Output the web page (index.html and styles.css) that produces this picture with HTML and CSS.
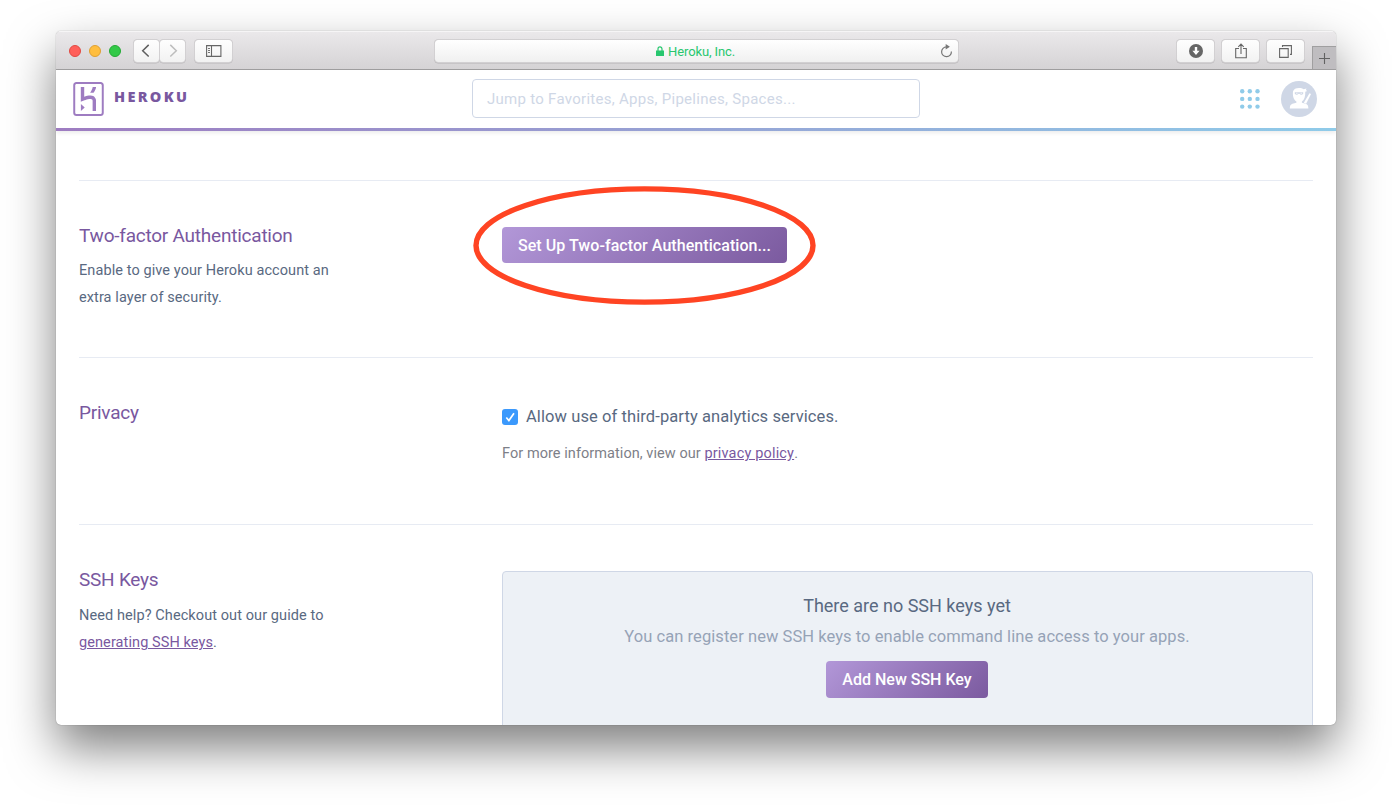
FILE: index.html
```
<!DOCTYPE html>
<html lang="en">
<head>
<meta charset="utf-8">
<title>Heroku, Inc.</title>
<link rel="stylesheet" href="styles.css">
</head>
<body>
<div class="window">
  <div class="toolbar">
    <div class="lights"><span class="light red"></span><span class="light yellow"></span><span class="light green"></span></div>
    <div class="nav">
      <button class="tool back"><svg width="26" height="22" viewBox="0 0 26 22"><path d="M14.700 4.900 8.700 10.700l6 5.800" fill="none" stroke="#5f5f5f" stroke-width="1.500"/></svg></button>
      <button class="tool forward"><svg width="26" height="22" viewBox="0 0 26 22"><path d="m10.300 4.900 6 5.800-6 5.800" fill="none" stroke="#bdbdbd" stroke-width="1.500"/></svg></button>
    </div>
    <button class="tool side"><svg width="16" height="12" viewBox="0 0 16 12" fill="none" stroke="#666"><path d="M.6.6h14.300v10.800H.6zM5.500.5v11" stroke-width="1.100"/><path d="M2 3.500h2M2 5.500h2M2 7.500h2" stroke-width=".9"/></svg></button>
    <div class="address">
      <span class="site"><svg width="8" height="10" viewBox="0 0 8 10"><path d="M2 5V3a2 2.200 0 0 1 4 0v2" fill="none" stroke="#28c76f" stroke-width="1.200"/><path d="M0 4.400h8V10H0z" fill="#28c76f"/></svg><span class="site-name">Heroku, Inc.</span></span>
      <svg width="13" height="14" viewBox="0 0 13 14"><path d="M6.500 2.900a4.900 4.900 0 1 0 4.900 4.600" fill="none" stroke="#777" stroke-width="1.200"/><path d="M5.700 0v5.400L9.900 2.800z" fill="#777"/></svg>
    </div>
    <div class="actions">
      <button class="tool wide"><svg width="14" height="14" viewBox="0 0 14 14"><circle cx="7" cy="7" r="7" fill="#666"/><path d="M5.800 3h2.400v3.800h2.400L7 10.900 3.400 6.800h2.400z" fill="#fff"/></svg></button>
      <button class="tool wide"><svg width="12" height="16" viewBox="0 0 12 16" fill="none" stroke="#666" stroke-width="1.100"><path d="M4 5.500H.7v9.300h10.600V5.500H8M6 11V1.200M3.300 3.800 6 1.100l2.700 2.700"/></svg></button>
      <button class="tool wide"><svg width="13" height="13" viewBox="0 0 13 13" fill="none" stroke="#666" stroke-width="1.100"><path d="M.6 3.600h8.600v8.800H.6zM3.500 2V.6h8.900v8.800H11"/></svg></button>
    </div>
    <button class="new-tab"><svg width="11" height="11" viewBox="0 0 11 11"><path d="M5.500 0v11M0 5.500h11" stroke="#626262" stroke-width="1.100"/></svg></button>
  </div>
  <header class="header">
    <div class="brand">
      <svg width="31" height="34" viewBox="1.23 0 21.54 24" fill="#9e7cc1"><path d="M20.61 0H3.39C2.189 0 1.23.96 1.23 2.16v19.681c0 1.198.959 2.159 2.16 2.159h17.22c1.2 0 2.159-.961 2.159-2.159V2.16C22.77.96 21.811 0 20.61 0zm.76 21.641c0 .539-.421.96-.96.96H3.59c-.54 0-.96-.421-.96-.96V2.36c0-.54.42-.961.96-.961h16.82c.539 0 .96.421.96.961v19.281zM6.63 20.399L9.33 18l-2.7-2.4v4.799zm9.72-9.719c-.479-.48-1.379-1.08-2.879-1.08-1.621 0-3.301.421-4.5.84V3.6h-2.4v10.38l1.68-.78s2.76-1.26 5.16-1.26c1.2 0 1.5.66 1.5 1.26v7.2h2.4v-7.2c.059-.179.059-1.501-.961-2.52zM13.17 7.5h2.4c1.08-1.26 1.62-2.521 1.8-3.9h-2.399c-.241 1.379-.841 2.64-1.801 3.9z"/></svg>
      <span class="brand-name">HEROKU</span>
    </div>
    <div class="search">Jump to Favorites, Apps, Pipelines, Spaces...</div>
    <div class="account">
      <svg width="20" height="20" viewBox="0 0 20 20" fill="#8fcbe9"><circle cx="2.200" cy="2.200" r="2.200"/><circle cx="9.800" cy="2.200" r="2.200"/><circle cx="17.500" cy="2.200" r="2.200"/><circle cx="2.200" cy="9.900" r="2.200"/><circle cx="9.800" cy="9.900" r="2.200"/><circle cx="17.500" cy="9.900" r="2.200"/><circle cx="2.200" cy="17.600" r="2.200"/><circle cx="9.800" cy="17.600" r="2.200"/><circle cx="17.500" cy="17.600" r="2.200"/></svg>
      <svg width="36" height="36" viewBox="0 0 36 36"><circle cx="18" cy="18" r="18" fill="#cfd7e6"/><g fill="#fff"><path d="M12 10.600C12.600 8 15 7 18 7c2 0 3.500.4 4.700 1.200l2.800-.8-.6 1.700 1.300 1-1.900.6c.1 4.600-.9 8.200-3.400 9.800v1.300l3.900 1c1.800.7 2.600 2 2.600 4.600H8.800c0-2.600.8-3.900 2.600-4.600l4-1v-1.300C12.600 18.900 11.500 15 12 10.600z"/><path d="m28.500 12.200 1.500.9-4.900 9.600-2.300-1z"/></g><path d="M13.800 11.200h8.400v1.500c-.8 1.200-2.800 1.300-3.700.1h-1c-.9 1.200-2.900 1.100-3.700-.1z" fill="#cfd7e6"/><path d="M15 12.300h1.600M19.500 12.300h1.600" stroke="#fff" stroke-width=".7"/></svg>
    </div>
  </header>
  <main class="content">
    <section class="row first">
      <div class="about"><h2>Two-factor Authentication</h2><p>Enable to give your Heroku account an<br>extra layer of security.</p></div>
      <div class="marked"><button class="btn setup">Set Up Two-factor Authentication...</button><svg class="ring" width="344" height="120" viewBox="0 0 344 120"><ellipse cx="172.500" cy="60.500" rx="168.500" ry="56.600" fill="none" stroke="#ff4423" stroke-width="5.400"/></svg></div>
    </section>
    <section class="row second">
      <div class="about"><h2>Privacy</h2></div>
      <div class="field">
        <div class="check"><span class="box"><svg width="16" height="16" viewBox="0 0 16 16"><path d="m4.300 8.500 2.600 3L12 4.300" fill="none" stroke="#fff" stroke-width="1.700"/></svg></span><span>Allow use of third-party analytics services.</span></div>
        <div class="note">For more information, view our <a>privacy policy</a>.</div>
      </div>
    </section>
    <section class="row third">
      <div class="about"><h2>SSH Keys</h2><p>Need help? Checkout out our guide to<br><a>generating SSH keys</a>.</p></div>
      <div class="panel"><h3>There are no SSH keys yet</h3><p>You can register new SSH keys to enable command line access to your apps.</p><button class="btn add">Add New SSH Key</button></div>
    </section>
  </main>
</div>
</body>
</html>
```
FILE: styles.css
```
* { box-sizing: border-box; }
body { margin: 0; height: 805px; padding: 31px 0 0 56px; overflow: hidden; background: #fff; font-family: Roboto, "Liberation Sans", sans-serif; color: #596981; }
button { font-family: inherit; border: 0; margin: 0; padding: 0; }
svg { display: block; flex: none; }
h2, h3, p { margin: 0; font-weight: 400; }

.window { width: 1280px; height: 694px; overflow: hidden; background: #fff; border-radius: 5px; display: flex; flex-direction: column;
  box-shadow: 0 0 1px rgba(0,0,0,.5), 0 23px 48px rgba(0,0,0,.5); }

.toolbar { height: 39px; flex: none; display: flex; align-items: flex-start; padding: 8px 0 0 13px; background: linear-gradient(#ebe9eb, #d5d3d5); border-bottom: 1px solid #a09fa0; box-shadow: inset 0 1px #f6f5f6; }
.lights { display: flex; gap: 8px; padding-top: 6px; width: 65px; }
.light { width: 12px; height: 12px; border-radius: 50%; border: 1px solid; }
.red { background: #ff5f5a; border-color: #e14942; }
.yellow { background: #ffbe3f; border-color: #dfa032; }
.green { background: #33c948; border-color: #24aa35; }
.nav { display: flex; gap: 1px; }
.tool { height: 22px; margin-top: 1px; display: flex; align-items: center; justify-content: center; background: linear-gradient(#fefefe, #f2f2f2); border-radius: 3.5px; box-shadow: 0 0 0 1px #d2d0d2, 0 .5px 0 1px #b9b7b9; }
.nav .tool { width: 25px; }
.side { width: 37px; margin-left: 10px; }
.address { width: 523px; height: 22px; margin: 1px 0 0 203px; background: linear-gradient(#fff, #f0f0f0); border-radius: 3.5px; box-shadow: 0 0 0 1px #d2d0d2, 0 .5px 0 1px #b5b3b5; display: flex; align-items: center; padding: 0 5px 0 221px; justify-content: space-between; }
.site { display: flex; align-items: center; gap: 4px; color: #28c76f; font-size: 13px; letter-spacing: -.1px; }
.actions { display: flex; gap: 8px; margin-left: 219px; }
.wide { width: 37px; }
.new-tab { width: 24px; height: 23px; margin: 7px 0 0 auto; background: #bfbdc0; border: 1px solid #a09fa0; border-width: 1px 0 0 1px; display: flex; align-items: center; justify-content: center; }

.header { height: 61px; flex: none; display: flex; align-items: flex-start; padding: 9px 19px 0 17px; border-bottom: 3px solid; border-image: linear-gradient(90deg, #9e7cc1, #8fcbe9) 1; box-shadow: 0 2px 4px rgba(0,0,0,.08); }
.brand { display: flex; gap: 10px; padding-top: 3px; width: 399px; }
.brand-name { font-family: "Open Sans", Roboto, sans-serif; font-size: 14.5px; font-weight: 800; letter-spacing: 2.3px; color: #79589f; line-height: 24px; padding-top: 3px; }
.search { width: 448px; height: 39px; border: 1px solid #cfd7e6; border-radius: 4px; padding-left: 14px; line-height: 38px; font-size: 15px; letter-spacing: .28px; color: #cfd7e6; }
.account { margin-left: auto; display: flex; gap: 21px; align-items: center; padding-top: 2px; }

.content { flex: 1; padding: 49px 23px 0; overflow: hidden; display: flex; flex-direction: column; }
.row { display: flex; flex: none; border-top: 1px solid #e7ebf3; padding-top: 46px; }
.first { height: 177px; }
.second { height: 167px; }
.about { width: 423px; }
.about h2 { font-size: 19px; letter-spacing: -.23px; line-height: 18px; color: #79589f; }
.about p { font-size: 14.5px; letter-spacing: .09px; line-height: 27px; margin-top: 12px; }
.third .about p { margin-top: 13px; }
a { color: #79589f; text-decoration: underline; }
.btn { color: #fff; font-weight: 500; border-radius: 4px; background: linear-gradient(135deg, #b297d8, #7b5a9f); display: flex; align-items: center; justify-content: center; }
.marked { position: relative; width: 285px; }
.setup { width: 285px; height: 36px; font-size: 16px; letter-spacing: .06px; padding-top: 1px; }
.ring { position: absolute; left: -30px; top: -42px; }
.check { display: flex; gap: 8px; align-items: center; font-size: 16.5px; letter-spacing: .09px; line-height: 24px; padding-top: 1px; }
.box { width: 16px; height: 16px; border-radius: 3px; background: #3b99fc; }
.note { font-size: 14.5px; letter-spacing: .06px; line-height: 24px; color: #7d8088; margin-top: 13px; }
.note a { letter-spacing: .17px; }
.panel { width: 811px; height: 240px; background: #edf1f6; border: 1px solid #cfd7e6; border-radius: 4px; display: flex; flex-direction: column; align-items: center; padding: 22px 1px 0 0; }
.panel h3 { font-size: 18px; line-height: 24px; }
.panel p { font-size: 16.5px; letter-spacing: .06px; line-height: 24px; margin-top: 7px; color: #96a3b6; }
.add { width: 162px; height: 37px; font-size: 16px; margin-top: 12px; }
```
